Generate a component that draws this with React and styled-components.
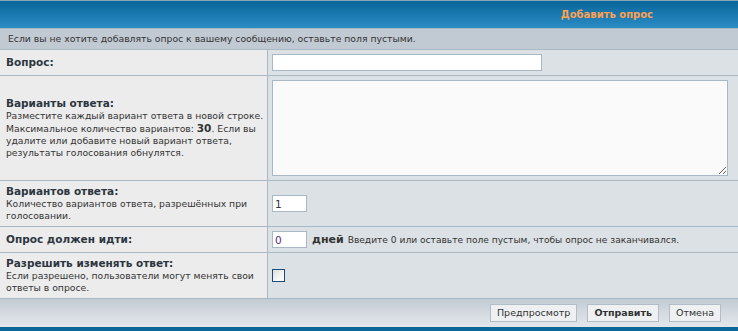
import React from "react";
import styled, { createGlobalStyle } from "styled-components";

const Global = createGlobalStyle`
  html, body { margin: 0; padding: 0; background: #dce1e5; }
  body { font-family: "DejaVu Sans", Verdana, sans-serif; color: #333; }
`;

const Page = styled.div`
  width: 738px;
  display: flex;
  flex-direction: column;
`;

const Header = styled.div`
  box-sizing: border-box;
  height: 29px;
  border-top: 1px solid #8aa5ba;
  border-bottom: 1px solid #a9b8c5;
  background: linear-gradient(to bottom, #0a6699 0%, #1b7bb2 55%, #2b8bc3 100%);
  display: flex;
  align-items: center;
  justify-content: flex-end;
  padding-right: 85px;
`;

const Title = styled.span`
  color: #ffa04f;
  font-weight: bold;
  font-size: 10px;
`;

const Notice = styled.div`
  box-sizing: border-box;
  height: 21px;
  background: #c1cad3;
  border-bottom: 1px solid #a9b8c5;
  padding-left: 8px;
  font-size: 9.25px;
  line-height: 20px;
  color: #333;
`;

const Grid = styled.div`
  display: grid;
  grid-template-columns: 268px 1fr;
`;

const LabelCell = styled.div`
  box-sizing: border-box;
  background: #ececec;
  border-right: 1px solid #a9b8c5;
  border-bottom: 1px solid #a9b8c5;
  padding: 4px 6px;
  display: flex;
  flex-direction: column;
  justify-content: center;
`;

const FieldCell = styled.div`
  box-sizing: border-box;
  background: #dce1e5;
  border-bottom: 1px solid #a9b8c5;
  padding: 4px 4px;
  display: flex;
  align-items: center;
  gap: 5px;
`;

const Label = styled.div`
  font-weight: bold;
  font-size: 10.5px;
  line-height: 13px;
  color: #2d3640;
`;

const Desc = styled.div`
  font-size: 9.25px;
  line-height: 12px;
  color: #333;
  white-space: nowrap;
  b { font-weight: bold; font-size: 10.5px; }
`;

const TextInput = styled.input`
  box-sizing: border-box;
  width: ${(p) => p.$w}px;
  height: 17px;
  border: 1px solid #a9b8c5;
  background: #fff;
  padding: 0 2px;
  font-family: "DejaVu Sans", Verdana, sans-serif;
  font-size: 10.5px;
  color: ${(p) => p.$color || "#333"};
  outline: none;
`;

const TextArea = styled.textarea`
  box-sizing: border-box;
  width: 456px;
  height: 96px;
  border: 1px solid #a9b8c5;
  background: #fafafa;
  margin: 0;
  padding: 2px;
  font-family: "DejaVu Sans", Verdana, sans-serif;
  font-size: 11px;
  outline: none;
  display: block;
`;

const Days = styled.span`
  font-weight: bold;
  font-size: 11px;
  color: #333;
`;

const Hint = styled.span`
  font-size: 9.1px;
  color: #333;
  margin-left: -1px;
`;

const Check = styled.input`
  appearance: none;
  box-sizing: border-box;
  width: 13px;
  height: 13px;
  margin: 0;
  border: 1px solid #1c4c7a;
  background: linear-gradient(135deg, #dcdcd8 0%, #f6f6f4 60%, #ffffff 100%);
`;

const Footer = styled.div`
  box-sizing: border-box;
  height: 28px;
  background: linear-gradient(to bottom, #c2cbd3 0%, #d4dae0 50%, #e2e7eb 100%);
  display: flex;
  align-items: center;
  justify-content: flex-end;
  gap: 10px;
  padding-right: 17px;
`;

const Button = styled.button`
  box-sizing: border-box;
  height: 18px;
  padding: 0 6px;
  border: 1px solid #b3bdc7;
  background: #eef0f1;
  font-family: "DejaVu Sans", Verdana, sans-serif;
  font-size: 9.5px;
  font-weight: ${(p) => (p.$primary ? "bold" : "normal")};
  color: #333;
  line-height: 16px;
  cursor: pointer;
`;

const BottomBar = styled.div`
  height: 24px;
  background: #0b6799;
`;

export default function App() {
  return (
    <Page>
      <Global />
      <Header>
        <Title>Добавить опрос</Title>
      </Header>
      <Notice>Если вы не хотите добавлять опрос к вашему сообщению, оставьте поля пустыми.</Notice>
      <Grid>
        <LabelCell>
          <Label>Вопрос:</Label>
        </LabelCell>
        <FieldCell>
          <TextInput $w={270} type="text" defaultValue="" />
        </FieldCell>

        <LabelCell>
          <Label>Варианты ответа:</Label>
          <Desc>Разместите каждый вариант ответа в новой строке.</Desc>
          <Desc>
            Максимальное количество вариантов: <b>30</b>. Если вы
          </Desc>
          <Desc>удалите или добавите новый вариант ответа,</Desc>
          <Desc>результаты голосования обнулятся.</Desc>
        </LabelCell>
        <FieldCell>
          <TextArea defaultValue="" />
        </FieldCell>

        <LabelCell>
          <Label>Вариантов ответа:</Label>
          <Desc>Количество вариантов ответа, разрешённых при</Desc>
          <Desc>голосовании.</Desc>
        </LabelCell>
        <FieldCell>
          <TextInput $w={35} type="text" defaultValue="1" />
        </FieldCell>

        <LabelCell>
          <Label>Опрос должен идти:</Label>
        </LabelCell>
        <FieldCell>
          <TextInput $w={35} $color="#5a2d86" type="text" defaultValue="0" />
          <Days>дней</Days>
          <Hint>Введите 0 или оставьте поле пустым, чтобы опрос не заканчивался.</Hint>
        </FieldCell>

        <LabelCell>
          <Label>Разрешить изменять ответ:</Label>
          <Desc>Если разрешено, пользователи могут менять свои</Desc>
          <Desc>ответы в опросе.</Desc>
        </LabelCell>
        <FieldCell>
          <Check type="checkbox" />
        </FieldCell>
      </Grid>
      <Footer>
        <Button>Предпросмотр</Button>
        <Button $primary>Отправить</Button>
        <Button>Отмена</Button>
      </Footer>
      <BottomBar />
    </Page>
  );
}
